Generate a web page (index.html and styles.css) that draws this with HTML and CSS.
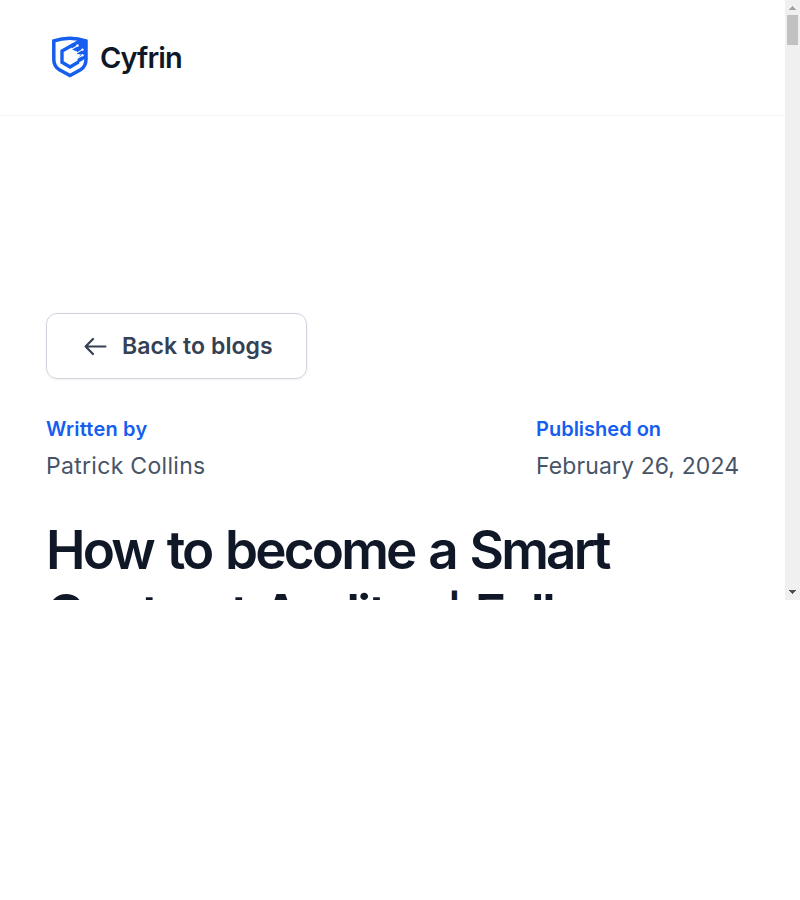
FILE: index.html
```
<!DOCTYPE html>
<html lang="en">
<head>
<meta charset="utf-8">
<title>Cyfrin blog</title>
<link rel="stylesheet" href="styles.css">
</head>
<body>
<div class="viewport">
  <div class="page">
    <header class="header">
      <a class="brand">
        <svg class="brand-mark" width="36" height="42" viewBox="0 0 36 42" fill="none">
          <path d="M1.8 4.9Q17.7-.6 34 4.9V23.5Q34 30.3 28.5 33.8L18 39.6L7.4 33.8Q1.8 30.3 1.8 23.5Z" stroke="#155eef" stroke-width="3.5"/>
          <path d="M22 8.2L10 15.1V26.3L18 31L26.5 26" stroke="#155eef" stroke-width="3.4"/>
          <path d="M19 8.2L26 4L35 4.5V21.5L25.5 27.4V22L29 18.5L25 18V15.5L20 13.5Z" fill="#155eef"/>
          <path d="M19.5 13.3L25.5 9.7M24 17.4L30.5 13.6M25 22.5L30.5 19.3" stroke="#fff" stroke-width="1.1"/>
          <circle cx="25.5" cy="9.5" r="1.2" fill="#fff"/><circle cx="30.5" cy="13.6" r="1.2" fill="#fff"/><circle cx="30.5" cy="19.3" r="1.2" fill="#fff"/>
        </svg>
        <span class="brand-name">Cyfrin</span>
      </a>
    </header>
    <main class="content">
      <a class="back">
        <svg width="24" height="20" viewBox="0 0 24 20" fill="none" stroke="#344054" stroke-width="2.2" stroke-linecap="round" stroke-linejoin="round"><path d="M21.4 10.5H1.6M9 3L1.6 10.5L9 18"/></svg>
        <span>Back to blogs</span>
      </a>
      <div class="meta">
        <div class="author"><div class="label">Written by</div><div class="value">Patrick Collins</div></div>
        <div class="date"><div class="label">Published on</div><div class="value">February 26, 2024</div></div>
      </div>
      <h1 class="title"><span class="line first">How to become a Smart</span><span class="line second">Contract Auditor <span class="bar">|</span> Full</span></h1>
    </main>
  </div>
  <div class="scrollbar">
    <svg width="7" height="4" viewBox="0 0 7 4" shape-rendering="crispEdges"><path d="M3 0h1v1h1v1h1v1h1v1H0V3h1V2h1V1h1z" fill="#a3a3a3"/></svg>
    <div class="thumb"></div>
    <svg class="down" width="7" height="4" viewBox="0 0 7 4" shape-rendering="crispEdges"><path d="M0 0h7v1H6v1H5v1H4v1H3V3H2V2H1V1H0z" fill="#505050"/></svg>
  </div>
</div>
</body>
</html>
```
FILE: styles.css
```
* { box-sizing: border-box; }
body { margin: 0; background: #fff; font-family: Inter, sans-serif; }
.viewport { display: flex; width: 800px; height: 600px; overflow: hidden; }
.page { width: 785px; height: 600px; overflow: hidden; }
.header { height: 116px; border-bottom: 1px solid #f2f4f7; padding: 36px 0 0 52px; }
.brand { display: flex; align-items: center; gap: 12px; height: 42px; }
.brand-name { padding-top: 2px; font-size: 29px; font-weight: 600; line-height: 42px; letter-spacing: -.95px; color: #101828; }
.content { padding: 197px 46px 0; }
.back { display: flex; align-items: center; gap: 14px; width: 261px; height: 66px; padding-left: 37px; border: 1px solid #d0d5dd; border-radius: 11px; box-shadow: 0 1px 3px rgba(16, 24, 40, .06); color: #344054; font-size: 23px; font-weight: 600; letter-spacing: .08px; white-space: nowrap; }
.meta { display: flex; justify-content: space-between; margin-top: 34px; white-space: nowrap; }
.date { width: 203px; }
.label { font-size: 20px; font-weight: 600; line-height: 32px; color: #155eef; }
.author .label { letter-spacing: .2px; }
.value { margin-top: 3px; font-size: 23px; line-height: 36px; letter-spacing: .1px; color: #475467; }
.author .value { letter-spacing: .3px; }
.title { margin: 34px 0 0; font-size: 53px; font-weight: 600; line-height: 64px; color: #101828; white-space: nowrap; }
.line { display: block; }
.first { letter-spacing: -2.85px; word-spacing: 3.2px; }
.second { letter-spacing: -2.8px; word-spacing: 4.5px; }
.bar { font-size: 44px; line-height: 1; }
.scrollbar { display: flex; flex-direction: column; align-items: center; width: 15px; height: 600px; padding: 6px 0; background: #f0f0f0; }
.thumb { width: 11px; height: 30px; margin-top: 5px; background: #c1c1c1; }
.down { margin-top: auto; }
```
